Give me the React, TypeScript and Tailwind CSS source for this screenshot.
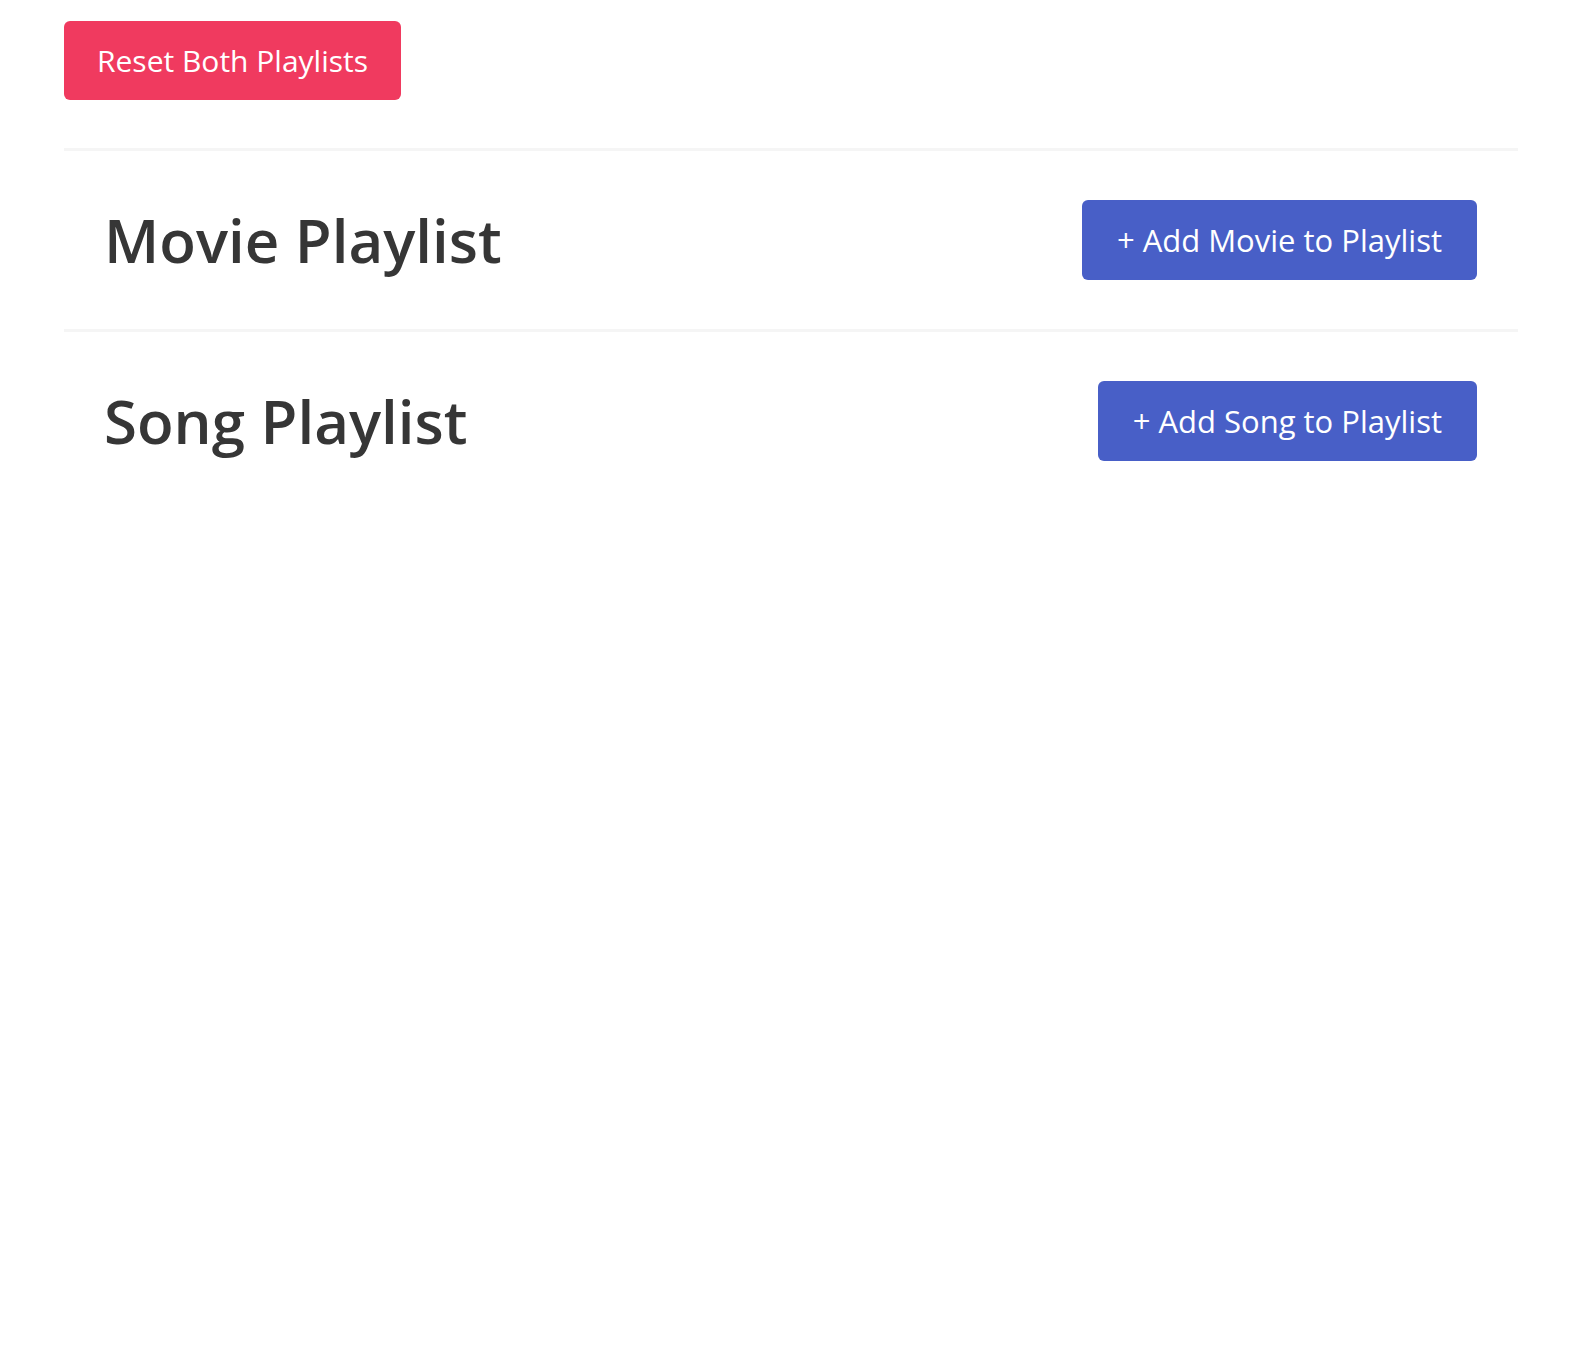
import React from "react";

function Section({ title, action }: { title: string; action: string }) {
  return (
    <div className="flex items-center justify-between pl-[40px] pr-[41px] py-[49px]">
      <h1 className="text-[60px] leading-none font-semibold text-[#363636]">
        {title}
      </h1>
      <button className="h-[80px] px-[35px] rounded-[6px] bg-[#485fc7] text-white text-[31px] leading-none">
        {action}
      </button>
    </div>
  );
}

export default function App() {
  return (
    <div className="min-h-[1370px] bg-white px-[64px] pt-[21px]" style={{ fontFamily: '"Open Sans", "Noto Sans", sans-serif' }}>
      <button className="h-[79px] px-[33px] rounded-[6px] bg-[#f03a5f] text-white text-[30px] leading-none">
        Reset Both Playlists
      </button>
      <div className="mt-[48px] h-[3px] bg-[#f5f5f5]" />
      <Section title="Movie Playlist" action="+ Add Movie to Playlist" />
      <div className="h-[3px] bg-[#f5f5f5]" />
      <Section title="Song Playlist" action="+ Add Song to Playlist" />
    </div>
  );
}
